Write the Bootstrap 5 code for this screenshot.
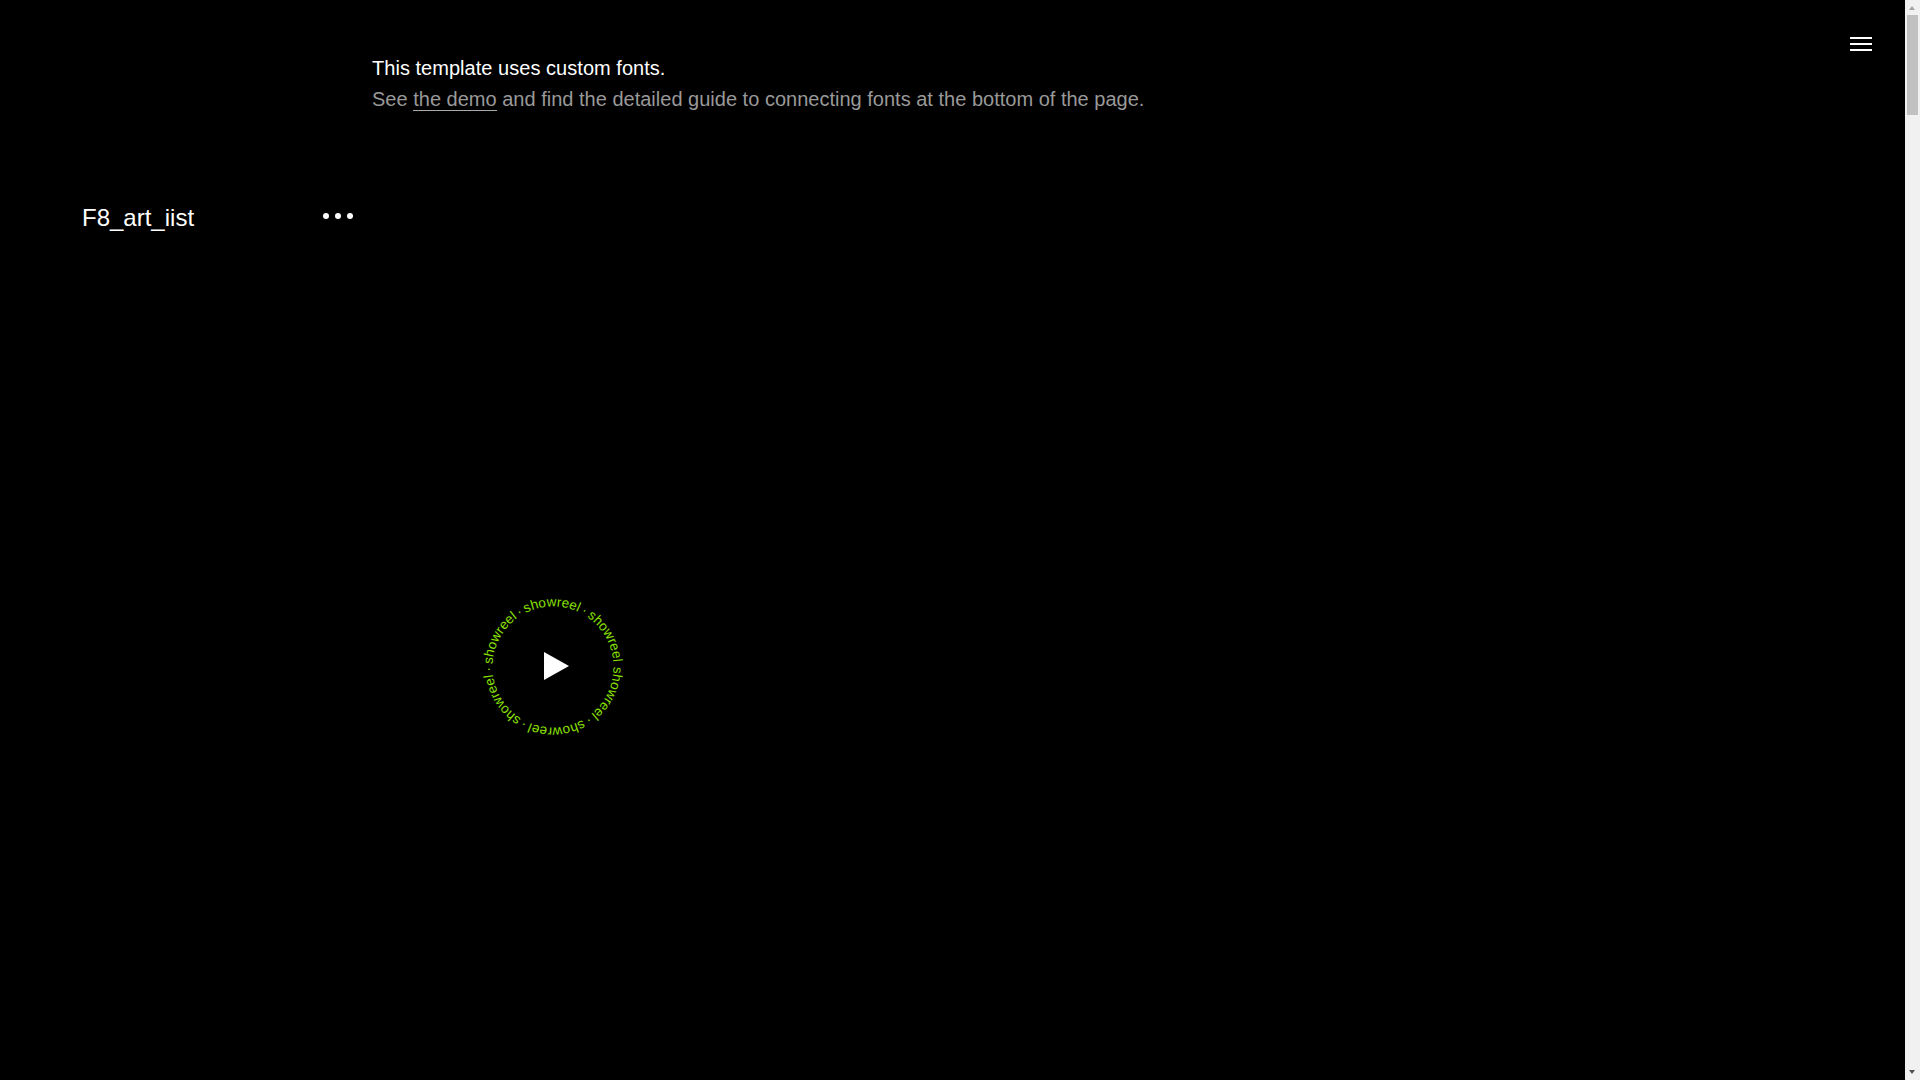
<!DOCTYPE html>
<html lang="en">
<head>
<meta charset="utf-8">
<title>F8_art_iist</title>
<link href="https://cdn.jsdelivr.net/npm/bootstrap@5.3.0/dist/css/bootstrap.min.css" rel="stylesheet">
<style>
html, body { background: #000; height: 100%; overflow: hidden; }
body { font-family: "Liberation Sans", Arial, sans-serif; color: #fff; font-kerning: none; }
.page-shell { padding-top: 53px; }
.menu-toggle { top: 37px; right: 48px; width: 22px; height: 14px; background: none; border: 0; padding: 0; display: flex; flex-direction: column; justify-content: space-between; }
.menu-toggle span { display: block; height: 2px; background: #fff; }
.notice { margin-left: 372px; font-size: 20px; line-height: 31px; }
.notice-lead { letter-spacing: .035px; }
.notice-sub { color: #999; letter-spacing: .008px; }
.notice-sub a { color: #999; text-decoration: none; border-bottom: 1px solid #aaa; }
.brand-row { margin-top: 87px; padding-left: 82px; width: 353px; }
.brand-name { font-size: 24px; line-height: 32px; }
.dots { gap: 6px; margin-top: -5px; }
.dots i { display: block; width: 6px; height: 6px; border-radius: 50%; background: #fff; }
.reel-wrap { margin-left: 473px; margin-top: 352px; width: 160px; height: 160px; }
.reel-text { font-size: 13.5px; word-spacing: -1px; fill: #8ae000; font-family: "Liberation Sans", Arial, sans-serif; }
.scroll-rail { top: 0; right: 0; bottom: 0; width: 15px; background: #f1f1f1; }
.scroll-thumb { margin: 15px 2px 0; height: 100px; background: #c1c1c1; }
.scroll-up, .scroll-down { left: 4px; width: 0; height: 0; border-left: 3.5px solid transparent; border-right: 3.5px solid transparent; }
.scroll-up { top: 6px; border-bottom: 4px solid #a3a3a3; }
.scroll-down { bottom: 6px; border-top: 4px solid #505050; }
</style>
</head>
<body>
<button class="menu-toggle position-fixed" aria-label="Menu"><span></span><span></span><span></span></button>
<div class="page-shell">
  <div class="notice">
    <div class="notice-lead">This template uses custom fonts.</div>
    <div class="notice-sub">See <a href="#">the demo</a> and find the detailed guide to connecting fonts at the bottom of the page.</div>
  </div>
  <div class="brand-row d-flex justify-content-between align-items-center">
    <div class="brand-name">F8_art_iist</div>
    <div class="dots d-flex"><i></i><i></i><i></i></div>
  </div>
  <div class="reel-wrap">
    <svg width="160" height="160" viewBox="0 0 160 160">
      <defs><path id="ring" d="M140.5 81 A60.5 60.5 0 1 1 140.5 80.9"/></defs>
      <text class="reel-text"><textPath href="#ring">showreel · showreel · showreel · showreel · showreel · showreel</textPath></text>
      <polygon points="71,66 96,80 71,94" fill="#fff"/>
    </svg>
  </div>
</div>
<div class="scroll-rail position-fixed" aria-hidden="true">
  <div class="scroll-up position-absolute"></div>
  <div class="scroll-thumb"></div>
  <div class="scroll-down position-absolute"></div>
</div>
<script src="https://cdn.jsdelivr.net/npm/bootstrap@5.3.0/dist/js/bootstrap.bundle.min.js"></script>
</body>
</html>
